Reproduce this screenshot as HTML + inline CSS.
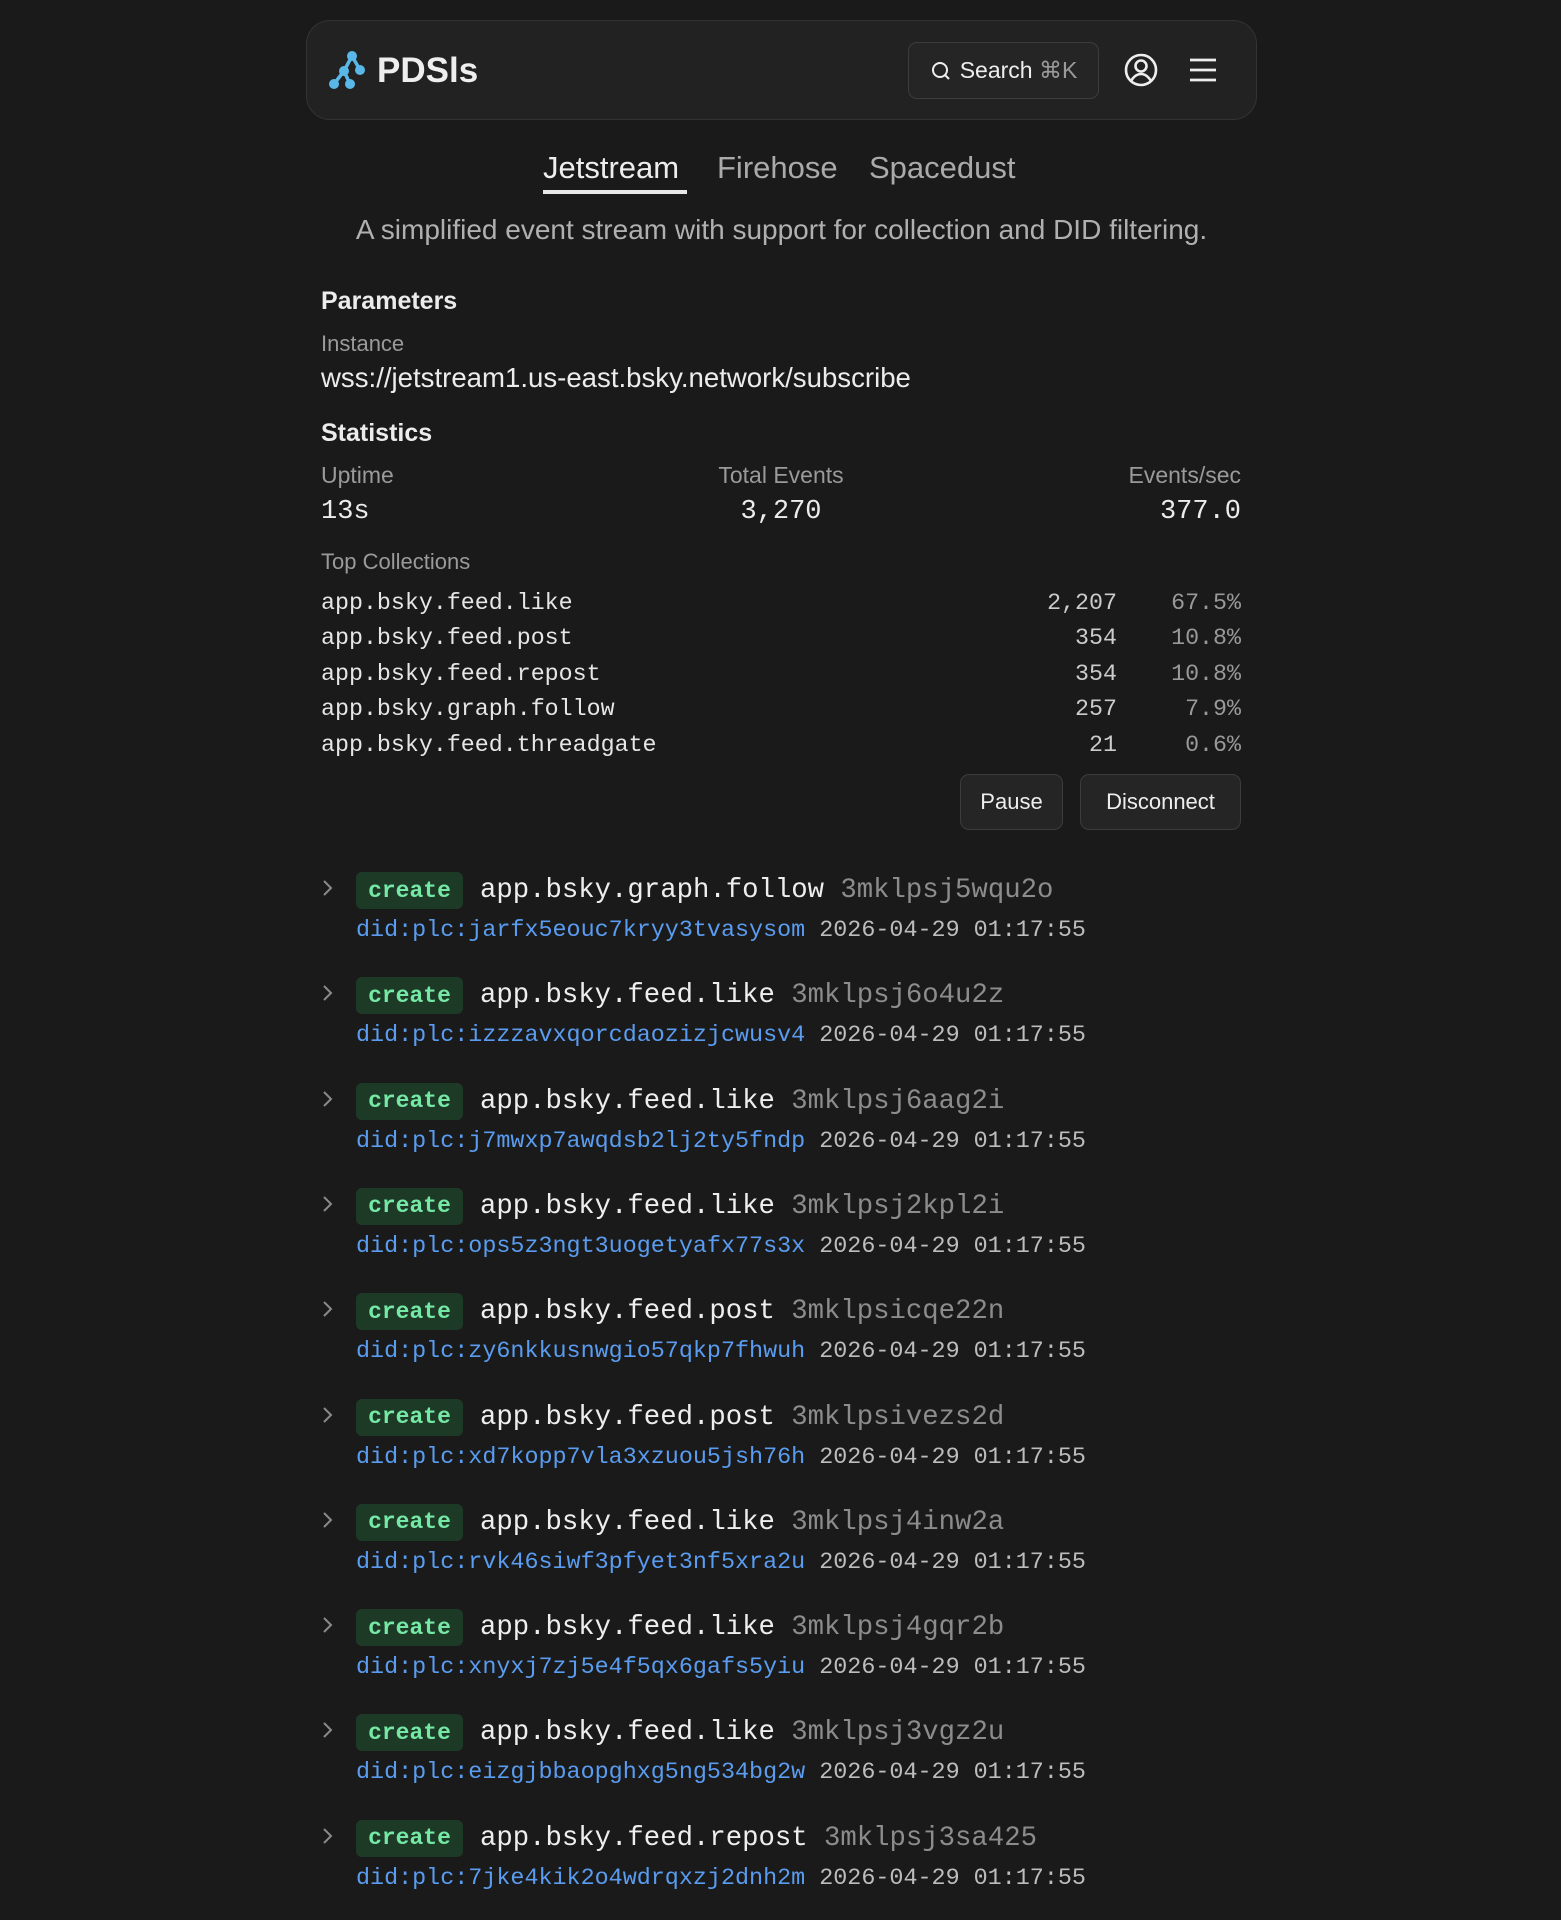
<!DOCTYPE html>
<html><head><meta charset="utf-8"><style>
*{margin:0;padding:0;box-sizing:border-box}
body{width:1561px;height:1920px;background:#1a1a1a;color:#ececec;font-family:"Liberation Sans",sans-serif;position:relative;overflow:hidden}
.a{position:absolute;white-space:nowrap}
.m{font-family:"Liberation Mono",monospace}
.hdr{left:306px;top:20px;width:951px;height:100px;border:1px solid #333;border-radius:24px;background:#222}
.btn{border:1px solid #3c3c3c;background:#252525;border-radius:9px;color:#eee;font-size:22px;display:flex;align-items:center;justify-content:center}
.gray{color:#9a9a9a}
.badge{background:#1d3a27;color:#74e8a4;font-weight:bold;border-radius:6px;width:107px;height:37px;font-size:23px;display:flex;align-items:center;justify-content:center}
</style></head><body>
<div class="a hdr"></div>
<svg class="a" style="left:320px;top:40px" width="60" height="60" viewBox="320 40 60 60">
<g stroke="#5ab8e8" stroke-width="3.5"><line x1="352" y1="56" x2="344" y2="71"/><line x1="352" y1="56" x2="360" y2="70"/><line x1="344" y1="71" x2="334" y2="84"/><line x1="344" y1="71" x2="350" y2="84"/></g>
<g fill="#5ab8e8"><circle cx="352" cy="56" r="5"/><circle cx="344" cy="71" r="5"/><circle cx="360" cy="70" r="5"/><circle cx="334" cy="84" r="5"/><circle cx="350" cy="84" r="5"/></g></svg>
<div class="a" style="left:377px;top:51px;font-size:35px;font-weight:bold;color:#eee">PDSls</div>
<div class="a btn" style="left:908px;top:42px;width:191px;height:57px;font-size:23px"><svg width="22" height="22" viewBox="0 0 22 22" style="margin-right:8px"><circle cx="10" cy="10" r="7" fill="none" stroke="#eee" stroke-width="2"/><line x1="15" y1="15" x2="19" y2="19" stroke="#eee" stroke-width="2"/></svg>Search&nbsp;<span class="gray">⌘K</span></div>
<svg class="a" style="left:1123px;top:52px" width="36" height="36" viewBox="0 0 36 36" fill="none" stroke="#eee" stroke-width="2.6"><circle cx="18" cy="18" r="15"/><circle cx="18" cy="14" r="5.5"/><path d="M8 29c3-5 6-7 10-7s7 2 10 7"/></svg>
<svg class="a" style="left:1189px;top:56px" width="28" height="28" viewBox="0 0 28 28" stroke="#eee" stroke-width="2.8"><line x1="1" y1="4" x2="27" y2="4"/><line x1="1" y1="14" x2="27" y2="14"/><line x1="1" y1="24" x2="27" y2="24"/></svg>
<div class="a" style="left:543px;top:150px;font-size:31px;color:#eee">Jetstream</div>
<div class="a" style="left:543px;top:190px;width:144px;height:4px;background:#e8e8e8"></div>
<div class="a gray" style="left:717px;top:150px;font-size:31px;color:#aaa">Firehose</div>
<div class="a gray" style="left:869px;top:150px;font-size:31px;color:#aaa">Spacedust</div>
<div class="a" style="left:306px;width:951px;text-align:center;top:214px;font-size:28px;color:#b0b0b0">A simplified event stream with support for collection and DID filtering.</div>
<div class="a" style="left:321px;top:287px;font-size:25px;font-weight:bold">Parameters</div>
<div class="a gray" style="left:321px;top:331px;font-size:22px">Instance</div>
<div class="a" style="left:321px;top:362px;font-size:27.6px">wss://jetstream1.us-east.bsky.network/subscribe</div>
<div class="a" style="left:321px;top:419px;font-size:25px;font-weight:bold">Statistics</div>
<div class="a gray" style="left:321px;top:462px;font-size:23px">Uptime</div>
<div class="a gray" style="left:681px;width:200px;text-align:center;top:462px;font-size:23px">Total Events</div>
<div class="a gray" style="right:320px;top:462px;font-size:23px">Events/sec</div>
<div class="a m" style="left:321px;top:497px;font-size:27px">13s</div>
<div class="a m" style="left:681px;width:200px;text-align:center;top:497px;font-size:27px">3,270</div>
<div class="a m" style="right:320px;top:497px;font-size:27px">377.0</div>
<div class="a gray" style="left:321px;top:549px;font-size:22px">Top Collections</div>
<div class="a m" style="left:321px;top:586px;font-size:23.3px;line-height:35.4px;color:#e6e6e6">app.bsky.feed.like<br>app.bsky.feed.post<br>app.bsky.feed.repost<br>app.bsky.graph.follow<br>app.bsky.feed.threadgate</div>
<div class="a m" style="right:444px;top:586px;font-size:23.3px;line-height:35.4px;text-align:right;color:#ccc">2,207<br>354<br>354<br>257<br>21</div>
<div class="a m" style="right:320px;top:586px;font-size:23.3px;line-height:35.4px;text-align:right;color:#999">67.5%<br>10.8%<br>10.8%<br>7.9%<br>0.6%</div>
<div class="a btn" style="left:960px;top:774px;width:103px;height:56px">Pause</div>
<div class="a btn" style="left:1080px;top:774px;width:161px;height:56px">Disconnect</div>
<div id="ev"></div>
<script>
var d=[["app.bsky.graph.follow","3mklpsj5wqu2o","jarfx5eouc7kryy3tvasysom"],["app.bsky.feed.like","3mklpsj6o4u2z","izzzavxqorcdaozizjcwusv4"],["app.bsky.feed.like","3mklpsj6aag2i","j7mwxp7awqdsb2lj2ty5fndp"],["app.bsky.feed.like","3mklpsj2kpl2i","ops5z3ngt3uogetyafx77s3x"],["app.bsky.feed.post","3mklpsicqe22n","zy6nkkusnwgio57qkp7fhwuh"],["app.bsky.feed.post","3mklpsivezs2d","xd7kopp7vla3xzuou5jsh76h"],["app.bsky.feed.like","3mklpsj4inw2a","rvk46siwf3pfyet3nf5xra2u"],["app.bsky.feed.like","3mklpsj4gqr2b","xnyxj7zj5e4f5qx6gafs5yiu"],["app.bsky.feed.like","3mklpsj3vgz2u","eizgjbbaopghxg5ng534bg2w"],["app.bsky.feed.repost","3mklpsj3sa425","7jke4kik2o4wdrqxzj2dnh2m"]];
var h="";d.forEach(function(r,i){var y=872+i*105.3;
h+='<svg class="a" style="left:321px;top:'+(y+6)+'px" width="14" height="20" viewBox="0 0 14 20"><path d="M3 3l7 7-7 7" fill="none" stroke="#8a8a8a" stroke-width="2"/></svg>';
h+='<div class="a badge m" style="left:356px;top:'+y+'px">create</div>';
h+='<div class="a m" style="left:480px;top:'+(y+3)+'px;font-size:27.3px;color:#eee">'+r[0]+' <span style="color:#8c8c8c">'+r[1]+'</span></div>';
h+='<div class="a m" style="left:356px;top:'+(y+46)+'px;font-size:23.4px"><span style="color:#5a9cf0">did:plc:'+r[2]+'</span> <span style="color:#bdbdbd">2026-04-29 01:17:55</span></div>';});
document.getElementById("ev").innerHTML=h;
</script>
</body></html>
